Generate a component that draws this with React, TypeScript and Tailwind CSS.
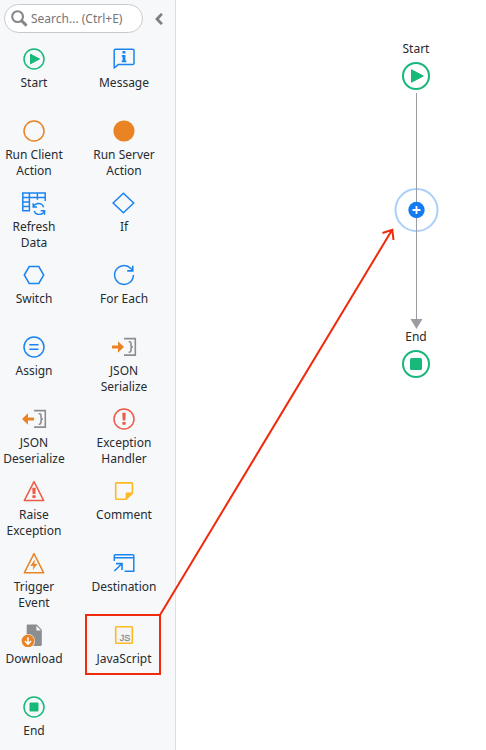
import type { ReactNode } from "react";

const BLUE = "#1b84f0";
const GREEN = "#17b978";
const ORANGE = "#e98324";
const RED = "#ee5a47";
const YELLOW = "#fdb924";
const GRAY = "#8b8d90";

function Glyph({ children }: { children: ReactNode }) {
  return (
    <svg className="block h-6 w-7 shrink-0" viewBox="-14 -12 28 24" fill="none">
      {children}
    </svg>
  );
}

function Bracket() {
  return (
    <g stroke={GRAY}>
      <path d="M0 -8.4H11.3V8.1H0" strokeWidth="1.6" />
      <path d="M4.6 -5.2H5.4Q7 -5.2 7 -3.6V-1.5Q7 0 8.9 0Q7 0 7 1.5V3.6Q7 5.2 5.4 5.2H4.6" strokeWidth="1.6" />
    </g>
  );
}

const items: { label: string[]; icon: ReactNode }[] = [
  {
    label: ["Start"],
    icon: (
      <>
        <circle r="10" stroke={GREEN} strokeWidth="1.5" />
        <path d="M-3.5 -4.8V4.8L5.5 0Z" fill={GREEN} stroke={GREEN} strokeWidth="1" strokeLinejoin="round" />
      </>
    ),
  },
  {
    label: ["Message"],
    icon: (
      <>
        <path d="M-9.8 9V-8.4Q-9.8 -9.8 -8.4 -9.8H8.6Q10 -9.8 10 -8.4V4.2Q10 5.6 8.6 5.6H-5.8Z" stroke={BLUE} strokeWidth="1.5" strokeLinejoin="round" />
        <path d="M-1.5 -8H1.4V-5.4H-1.5ZM-2.2 -4H1.4V1.4H2.3V3.2H-2.2V1.4H-1.4V-2.2H-2.2Z" fill={BLUE} />
      </>
    ),
  },
  { label: ["Run Client", "Action"], icon: <circle r="10" stroke={ORANGE} strokeWidth="1.5" /> },
  { label: ["Run Server", "Action"], icon: <circle r="10.6" fill={ORANGE} /> },
  {
    label: ["Refresh", "Data"],
    icon: (
      <>
        <path d="M-4.6 7.8H-11.2V-10H11.2V-2M-11.2 -5.6H11.2M-11.2 -1.1H-4.6M-11.2 3.4H-4.6M-4.6 -10V8.5M3.4 -10V-3.2" stroke={BLUE} strokeWidth="1.5" />
        <path d="M-.5 3.8A5.4 5.4 0 0 1 9.6 4.2M10.3 8A5.4 5.4 0 0 1 .2 8" stroke={BLUE} strokeWidth="1.5" />
        <path d="M-.8 .2V4.1H3M10.5 11.8V7.8H6.7" stroke={BLUE} strokeWidth="1.5" />
      </>
    ),
  },
  { label: ["If"], icon: <path d="M-.6 -9.7L9.7 0L-.6 9.7L-10.9 0Z" stroke={BLUE} strokeWidth="1.5" /> },
  { label: ["Switch"], icon: <path d="M-9.7 0L-4.8 -8.4H4.8L9.7 0L4.8 8.4H-4.8Z" stroke={BLUE} strokeWidth="1.5" /> },
  {
    label: ["For Each"],
    icon: (
      <>
        <path d="M9.4 0A9.4 9.4 0 1 1 6.8 -6.5L8.8 -4.5" stroke={BLUE} strokeWidth="1.5" />
        <path d="M8.7 -9.2V-4.2H3.2" stroke={BLUE} strokeWidth="1.7" />
      </>
    ),
  },
  {
    label: ["Assign"],
    icon: (
      <>
        <circle r="10" stroke={BLUE} strokeWidth="1.5" />
        <path d="M-4.7 -2.3H4.5M-4.7 2.3H4.5" stroke={BLUE} strokeWidth="1.5" />
      </>
    ),
  },
  {
    label: ["JSON", "Serialize"],
    icon: (
      <>
        <path d="M-12 -1.4H-6V-5.7L0 0L-6 5.7V1.4H-12Z" fill={ORANGE} />
        <Bracket />
      </>
    ),
  },
  {
    label: ["JSON", "Deserialize"],
    icon: (
      <>
        <path d="M0 -1.4H-6V-5.7L-12 0L-6 5.7V1.4H0Z" fill={ORANGE} />
        <Bracket />
      </>
    ),
  },
  {
    label: ["Exception", "Handler"],
    icon: (
      <>
        <circle r="10" stroke={RED} strokeWidth="1.5" />
        <path d="M-1.7 -6.2H1.7L1.3 1.5H-1.3ZM-1.6 3H1.6V5.8H-1.6Z" fill={RED} />
      </>
    ),
  },
  {
    label: ["Raise", "Exception"],
    icon: (
      <>
        <path d="M0 -9.4L9.7 9.6H-9.7Z" stroke={RED} strokeWidth="1.5" strokeLinejoin="round" />
        <path d="M-1.7 -3.2H1.7L1.4 3H-1.4ZM-1.6 4.3H1.6V7H-1.6Z" fill={RED} />
      </>
    ),
  },
  {
    label: ["Comment"],
    icon: (
      <>
        <path d="M2 8.3H-7.4Q-8.3 8.3 -8.3 7.4V-7.2Q-8.3 -8.1 -7.4 -8.1H7.5Q8.4 -8.1 8.4 -7.2V2.2Z" stroke={YELLOW} strokeWidth="1.6" />
        <path d="M1.6 9V3Q1.6 1.6 3 1.6H9Z" fill={YELLOW} />
      </>
    ),
  },
  {
    label: ["Trigger", "Event"],
    icon: (
      <>
        <path d="M0 -9.4L9.7 9.8H-9.7Z" stroke={ORANGE} strokeWidth="1.5" strokeLinejoin="round" />
        <path d="M1.1 -3.8L-3.7 3L-.5 2.7L-1.4 7.3L3.4 .7L.3 1Z" fill={ORANGE} />
      </>
    ),
  },
  {
    label: ["Destination"],
    icon: (
      <>
        <path d="M-9.7 -2V-7.2Q-9.7 -8.2 -8.7 -8.2H8.8Q9.8 -8.2 9.8 -7.2V8.2H.6M-9.7 -5.2H9.8" stroke={BLUE} strokeWidth="1.5" />
        <path d="M-9.6 8L-2.2 .8M-8 .6H-2V7" stroke={BLUE} strokeWidth="1.6" />
      </>
    ),
  },
  {
    label: ["Download"],
    icon: (
      <>
        <path d="M-7.3 -9.5Q-7.3 -10.6 -6.2 -10.6H2.8L7.8 -5.2V9.8Q7.8 10.9 6.7 10.9H-7.3Z" fill={GRAY} />
        <path d="M2.4 -9.2V-4.6H7Z" fill="#f6f8fa" />
        <circle cx="-6" cy="6" r="7" fill="#f6f8fa" />
        <circle cx="-6" cy="6" r="6.4" fill={ORANGE} />
        <path d="M-6 2.2V9M-9.1 6L-6 9.1L-2.9 6" stroke="#fff" strokeWidth="1.5" />
      </>
    ),
  },
  {
    label: ["JavaScript"],
    icon: (
      <>
        <rect x="-8.3" y="-8.3" width="16.6" height="16.6" rx=".8" fill="#f4f5f6" stroke={YELLOW} strokeWidth="1.6" />
        <text x="1" y="6" fill={GRAY} stroke={GRAY} strokeWidth=".3" textAnchor="middle" className="font-['Liberation_Sans'] text-[9px]">
          JS
        </text>
      </>
    ),
  },
  {
    label: ["End"],
    icon: (
      <>
        <circle r="10" stroke={GREEN} strokeWidth="1.5" />
        <rect x="-4.5" y="-4.5" width="9" height="9" rx="1" fill={GREEN} />
      </>
    ),
  },
];

function Toolbox() {
  return (
    <aside className="flex w-44 shrink-0 flex-col overflow-hidden border-r border-[#dcdfe3] bg-[#f6f8fa]">
      <div className="flex items-center pt-1 pl-1">
        <div className="flex h-[29px] w-[139px] items-center rounded-full border border-[#c8cacd] bg-white pl-1.5">
          <svg className="size-[17px] shrink-0" viewBox="0 0 17 17" fill="none" stroke="#85878a">
            <circle cx="6.6" cy="6.6" r="5.4" strokeWidth="2.1" />
            <path d="M10.2 10.4L15.6 15.6" strokeWidth="3" />
          </svg>
          <span className="ml-[3px] text-xs whitespace-nowrap text-[#74767a]">Search... (Ctrl+E)</span>
        </div>
        <svg className="ml-3 h-3 w-2" viewBox="0 0 8 12" fill="none">
          <path d="M6.9 .9L2 6L6.9 11.1" stroke="#7c7f83" strokeWidth="2.8" />
        </svg>
      </div>
      <div className="-ml-[11px] grid w-[180px] auto-rows-[72px] grid-cols-2 pt-3.5">
        {items.map((item) => (
          <div key={item.label.join(" ")} className="flex flex-col items-center gap-1 text-center">
            <Glyph>{item.icon}</Glyph>
            <div className="text-xs leading-4 whitespace-nowrap">
              {item.label.map((line) => (
                <div key={line}>{line}</div>
              ))}
            </div>
          </div>
        ))}
      </div>
    </aside>
  );
}

function Flow() {
  return (
    <main className="flex flex-1 flex-col items-center pt-[41px]">
      <div className="ml-[170px] flex w-20 flex-col items-center text-xs leading-4">
        <span>Start</span>
        <svg className="mt-[3px] h-8 w-8" viewBox="-16 -16 32 32" fill="none">
          <circle r="13" stroke={GREEN} strokeWidth="2" />
          <path d="M-4.5 -6.2V6.2L7.3 0Z" fill={GREEN} stroke={GREEN} strokeLinejoin="round" />
        </svg>
        <svg className="h-[237px] w-12" viewBox="0 0 48 237" fill="none">
          <circle cx="24.5" cy="118" r="21" fill="#fff" stroke="#a9cffa" strokeWidth="2" />
          <path d="M24.5 1V228" stroke="#9b9da3" />
          <path d="M18.5 227H30.5L24.5 237Z" fill="#9b9da3" />
          <circle cx="24.5" cy="118" r="8.2" fill="#147bf3" />
          <path d="M20.5 118H28.5M24.5 114V122" stroke="#fff" strokeWidth="1.8" />
        </svg>
        <span>End</span>
        <svg className="mt-[3px] h-8 w-8" viewBox="-16 -16 32 32" fill="none">
          <circle r="13" stroke={GREEN} strokeWidth="2" />
          <rect x="-6" y="-6" width="12" height="12" rx="1.5" fill={GREEN} />
        </svg>
      </div>
    </main>
  );
}

export default function App() {
  return (
    <div className="relative flex h-[750px] w-[486px] overflow-hidden bg-white font-['Noto_Sans',sans-serif] text-[#272b30]">
      <Toolbox />
      <Flow />
      <svg className="pointer-events-none absolute inset-0 h-[750px] w-[486px]" viewBox="0 0 486 750" fill="none" stroke="#f02a0b" strokeWidth="2">
        <rect x="86" y="615" width="74" height="59" />
        <path d="M160 615L392 230M382.5 233L392.3 229.8L393.5 240" />
      </svg>
    </div>
  );
}
